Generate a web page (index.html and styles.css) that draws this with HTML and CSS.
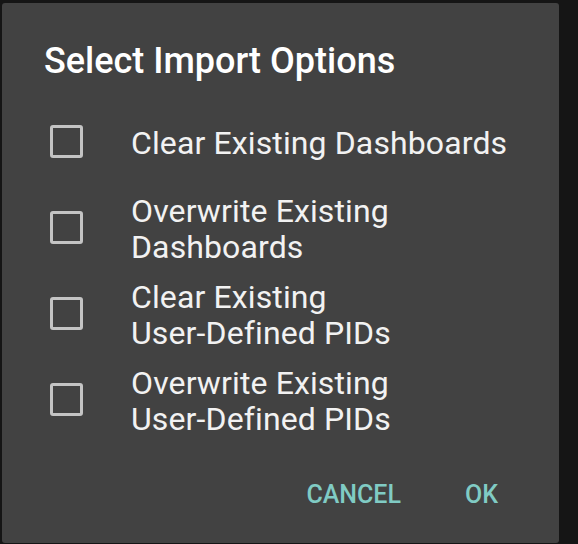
FILE: index.html
```html
<!DOCTYPE html>
<html>
<head>
<meta charset="utf-8">
<link rel="stylesheet" href="styles.css">
</head>
<body>
<div class="dialog">
  <h1 class="title">Select Import Options</h1>
  <div class="options">
    <label class="option"><span class="box"></span><span class="label">Clear Existing Dashboards</span></label>
    <label class="option"><span class="box"></span><span class="label">Overwrite Existing<br>Dashboards</span></label>
    <label class="option"><span class="box"></span><span class="label">Clear Existing<br>User-Defined PIDs</span></label>
    <label class="option"><span class="box"></span><span class="label">Overwrite Existing<br>User-Defined PIDs</span></label>
  </div>
  <div class="actions">
    <span class="btn">CANCEL</span>
    <span class="btn">OK</span>
  </div>
</div>
</body>
</html>
```
FILE: styles.css
```css
html, body {
  margin: 0;
  padding: 0;
  background: #151515;
  height: 544px;
  overflow: hidden;
}
body {
  padding: 3px 0 0 2px;
  box-sizing: border-box;
  font-family: Roboto, "Noto Sans", sans-serif;
}
.dialog {
  width: 557px;
  height: 540px;
  background: #424242;
  border-radius: 3px;
  box-sizing: border-box;
  padding: 0;
  display: flex;
  flex-direction: column;
}
.title {
  margin: 0;
  padding: 33px 0 0 42px;
  font-size: 36px;
  font-weight: 500;
  color: #ffffff;
  line-height: 50px;
  height: 95px;
  box-sizing: border-box;
}
.options {
  display: flex;
  flex-direction: column;
}
.option {
  display: flex;
  align-items: center;
  height: 86px;
}
.box {
  width: 27px;
  height: 27px;
  border: 3px solid #c4c4c4;
  border-radius: 3px;
  margin-left: 48px;
  flex: none;
}
.label {
  margin-left: 48px;
  padding-top: 3px;
  font-size: 32px;
  letter-spacing: 0.12px;
  line-height: 36px;
  color: #f2f2f2;
}
.actions {
  display: flex;
  justify-content: flex-end;
  gap: 64px;
  padding: 33px 61px 0 0;
}
.btn {
  font-size: 25px;
  font-weight: 500;
  color: #80cbc4;
  line-height: 40px;
}
```
